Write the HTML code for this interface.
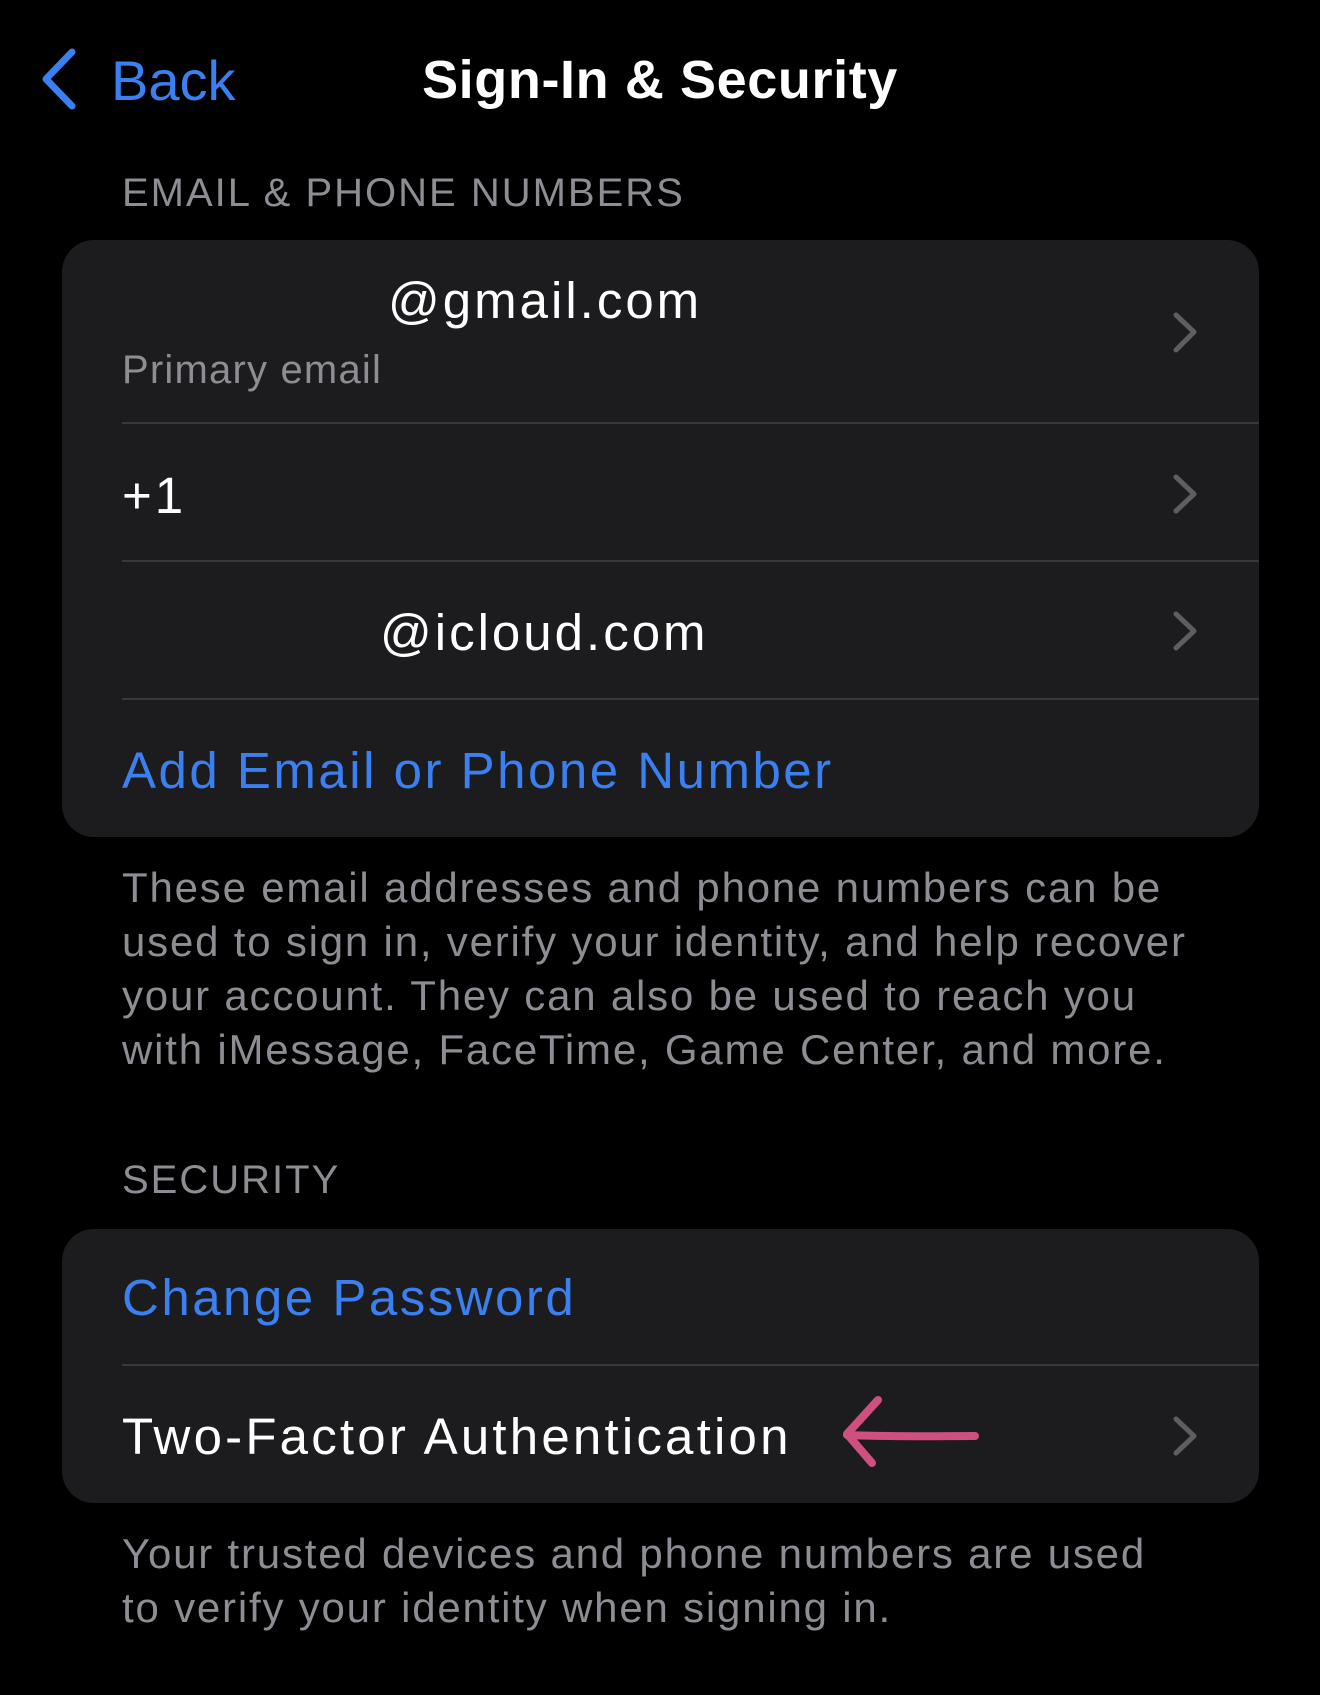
<!DOCTYPE html>
<html><head><meta charset="utf-8"><style>
*{margin:0;padding:0;box-sizing:border-box}
body{width:1320px;height:1695px;background:#000;font-family:"Liberation Sans",sans-serif;position:relative;overflow:hidden;color:#fff}
.a{position:absolute;white-space:nowrap;line-height:1}
.card{position:absolute;left:62px;width:1197px;background:#1c1c1e;border-radius:32px}
.sep{position:absolute;left:122px;right:61px;height:2px;background:#38383a}
.t{font-size:51px;color:#fff;letter-spacing:3px}
.b{color:#3a80f0}
.g{color:#8d8d93}
.h{font-size:40px;letter-spacing:2px}
.foot{position:absolute;left:122px;font-size:42px;color:#8d8d93;line-height:54px;white-space:nowrap;letter-spacing:1.8px}
</style></head><body>
<svg class="a" style="left:36px;top:46px" width="50" height="66" viewBox="0 0 50 66"><path d="M36 6 L10 33 L36 60" fill="none" stroke="#3a80f0" stroke-width="7" stroke-linecap="round" stroke-linejoin="round"/></svg>
<div class="a b" style="left:111px;top:53px;font-size:56px">Back</div>
<div class="a" style="left:0;width:1320px;text-align:center;top:53px;font-size:54px;font-weight:bold;letter-spacing:0.6px">Sign-In &amp; Security</div>
<div class="a g h" style="left:122px;top:173px">EMAIL &amp; PHONE NUMBERS</div>

<div class="card" style="top:240px;height:597px"></div>
<div class="a t" style="left:388px;top:275px">@gmail.com</div>
<div class="a g" style="left:122px;top:350px;font-size:40px;letter-spacing:1.2px">Primary email</div>
<div class="sep" style="top:422px"></div>
<div class="a t" style="left:122px;top:470px">+1</div>
<div class="sep" style="top:560px"></div>
<div class="a t" style="left:380px;top:607px">@icloud.com</div>
<div class="sep" style="top:698px"></div>
<div class="a t b" style="left:122px;top:745px;letter-spacing:2.5px">Add Email or Phone Number</div>

<div class="foot" style="top:861px">These email addresses and phone numbers can be<br>used to sign in, verify your identity, and help recover<br>your account. They can also be used to reach you<br>with iMessage, FaceTime, Game Center, and more.</div>

<div class="a g h" style="left:122px;top:1160px">SECURITY</div>
<div class="card" style="top:1229px;height:274px"></div>
<div class="a t b" style="left:122px;top:1272px;letter-spacing:2.5px">Change Password</div>
<div class="sep" style="top:1364px"></div>
<div class="a t" style="left:122px;top:1411px;letter-spacing:3.2px">Two-Factor Authentication</div>

<svg class="a" style="left:0;top:0" width="1320" height="1695">
<g fill="none" stroke="#5e5e62" stroke-width="5" stroke-linecap="round" stroke-linejoin="round">
<path d="M1176 315 L1194 332 L1176 350"/>
<path d="M1176 477 L1194 494 L1176 511"/>
<path d="M1176 614 L1194 631 L1176 648"/>
<path d="M1176 1419 L1194 1436 L1176 1453"/>
</g>
<g fill="none" stroke="#cf4f80" stroke-width="8" stroke-linecap="round" stroke-linejoin="round">
<path d="M847 1435 C900 1437 940 1436 975 1436"/>
<path d="M878 1400 L847 1434 L872 1463"/>
</g>
</svg>

<div class="foot" style="top:1527px">Your trusted devices and phone numbers are used<br>to verify your identity when signing in.</div>
</body></html>
